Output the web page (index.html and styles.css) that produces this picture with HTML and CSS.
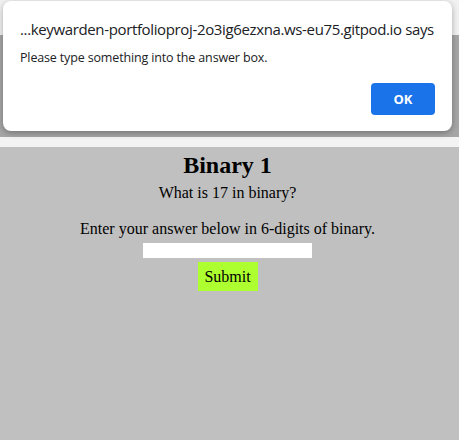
FILE: index.html
```html
<!DOCTYPE html>
<html lang="en">
<head>
<meta charset="utf-8">
<title>Binary 1</title>
<link rel="stylesheet" href="styles.css">
</head>
<body>
<div class="top"></div>
<div class="dim"></div>
<div class="strip"></div>
<main class="page">
  <h1 class="title">Binary 1</h1>
  <p class="question">What is 17 in binary?</p>
  <p class="prompt">Enter your answer below in 6-digits of binary.</p>
  <input class="answer" type="text">
  <button class="submit" type="button">Submit</button>
</main>
<div class="dialog">
  <div class="dialog-title">...keywarden-portfolioproj-2o3ig6ezxna.ws-eu75.gitpod.io says</div>
  <div class="dialog-msg">Please type something into the answer box.</div>
  <div class="dialog-actions"><button class="ok" type="button">OK</button></div>
</div>
</body>
</html>
```
FILE: styles.css
```css
html, body {
  margin: 0;
  padding: 0;
  height: 100%;
}
body {
  display: flex;
  flex-direction: column;
  background: #c0c0c0;
  font-family: "Liberation Serif", "Times New Roman", serif;
  overflow: hidden;
}
.top {
  height: 35px;
  background: #f1f1f1;
  flex: none;
}
.dim {
  height: 102px;
  background: #a6a6a6;
  flex: none;
}
.strip {
  height: 10px;
  background: #f3f3f3;
  flex: none;
}
.page {
  flex: 1;
  background: #c0c0c0;
  display: flex;
  flex-direction: column;
  align-items: center;
  color: #000;
  padding-right: 4px;
}
.title {
  font-size: 24px;
  font-weight: bold;
  margin: 4px 0 0;
  line-height: 28px;
}
.question {
  font-size: 16px;
  margin: 5px 0 0;
  line-height: 18px;
}
.prompt {
  font-size: 16px;
  margin: 18px 0 0;
  line-height: 18px;
}
.answer {
  width: 169px;
  height: 15px;
  margin: 5px 0 0;
  padding: 0;
  border: none;
  background: #fff;
  box-sizing: border-box;
}
.submit {
  margin: 4px 0 0;
  width: 60px;
  height: 29px;
  padding: 0;
  border: none;
  background: #adff2f;
  font-family: "Liberation Serif", "Times New Roman", serif;
  font-size: 16px;
  color: #000;
}
.dialog {
  position: absolute;
  left: 3px;
  top: 1px;
  width: 449px;
  height: 130px;
  box-sizing: border-box;
  background: #fff;
  border-radius: 8px;
  box-shadow: 0 2px 6px rgba(0,0,0,0.3);
  padding: 18px 16px 0 17px;
  font-family: "Open Sans", "Noto Sans", sans-serif;
  color: #202124;
}
.dialog-title {
  font-size: 15px;
  line-height: 20px;
  white-space: nowrap;
  letter-spacing: -0.36px;
}
.dialog-msg {
  font-size: 12.5px;
  line-height: 18px;
  margin-top: 10px;
  letter-spacing: -0.15px;
}
.dialog-actions {
  display: flex;
  justify-content: flex-end;
  margin-top: 16px;
  padding-right: 1px;
}
.ok {
  width: 64px;
  height: 32px;
  border: none;
  border-radius: 4px;
  background: #1a73e8;
  color: #fff;
  font-family: "Open Sans", "Noto Sans", sans-serif;
  font-weight: bold;
  font-size: 13px;
  padding: 0;
}
```
